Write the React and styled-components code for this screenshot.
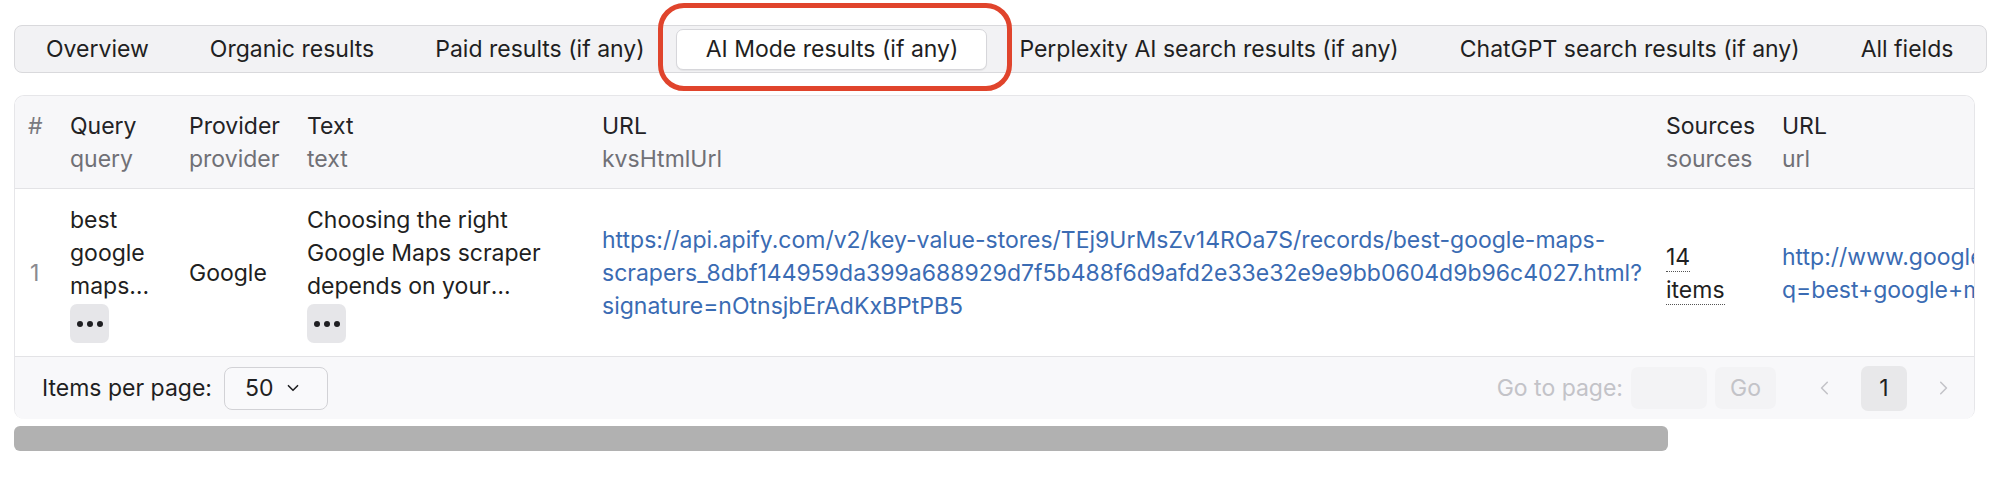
import React from "react";
import styled, { createGlobalStyle } from "styled-components";

const GlobalStyle = createGlobalStyle`
  body {
    margin: 0;
    background: #ffffff;
    font-family: Inter, "Noto Sans", sans-serif;
    color: #1f1f22;
  }
`;

const Page = styled.div`
  padding: 25px 13px 0 14px;
`;

// tab bar
const TabBar = styled.div`
  display: flex;
  align-items: center;
  height: 46px;
  padding: 0 4px 0 1px;
  background: #f2f2f4;
  border: 1px solid #d9d9dc;
  border-radius: 8px;
`;

const Tab = styled.div`
  position: relative;
  height: 41px;
  display: flex;
  align-items: center;
  padding: 0 28px 0 29px;
  margin-right: 2px;
  font-size: 23px;
  white-space: nowrap;
  color: #1f1f22;
  border-radius: 7px;
  box-sizing: border-box;
  background: ${(p) => (p.active ? "#ffffff" : "transparent")};
  border: 1px solid ${(p) => (p.active ? "#d6d6da" : "transparent")};
  box-shadow: ${(p) => (p.active ? "0 1px 1px rgba(0,0,0,0.06)" : "none")};
`;

// red annotation ring drawn over the active tab
const Ring = styled.span`
  position: absolute;
  left: -19px;
  right: -26px;
  top: -27px;
  bottom: -22px;
  border: 5px solid #e0442c;
  border-radius: 26px;
  pointer-events: none;
`;

const TableCard = styled.div`
  margin-top: 22px;
  width: 1961px;
  border: 1px solid #e6e6e9;
  border-bottom: none;
  border-radius: 10px;
  overflow: hidden;
  box-sizing: border-box;
`;

const Grid = styled.div`
  display: grid;
  grid-template-columns: 42px 119px 118px 295px 1064px 116px 420px;
  padding-left: 13px;
  background: ${(p) => (p.head ? "#f7f7f9" : "#ffffff")};
  border-bottom: 1px solid #e3e3e6;
  align-items: ${(p) => (p.head ? "start" : "center")};
  padding-top: ${(p) => (p.head ? "14px" : "15px")};
  padding-bottom: ${(p) => (p.head ? "12px" : "13px")};
`;

const HeadCell = styled.div`
  font-size: 23px;
  line-height: 33px;
  white-space: nowrap;
  color: ${(p) => (p.muted ? "#7a7a80" : "#232326")};
`;

const SubLabel = styled.div`
  color: #707076;
`;

const Cell = styled.div`
  font-size: 23px;
  line-height: 33px;
  color: ${(p) => (p.muted ? "#8a8a90" : "#1f1f22")};
  white-space: nowrap;
  overflow: hidden;
`;

const Clamp = styled.div`
  width: ${(p) => p.w}px;
  white-space: normal;
  display: -webkit-box;
  -webkit-line-clamp: 3;
  -webkit-box-orient: vertical;
  overflow: hidden;
`;

const MoreButton = styled.div`
  width: 39px;
  height: 39px;
  margin-top: 1px;
  border-radius: 7px;
  background: #e6e6e9;
  display: flex;
  align-items: center;
  justify-content: center;
  gap: 4px;
`;

const Dot = styled.span`
  width: 6px;
  height: 6px;
  border-radius: 50%;
  background: #1f1f22;
`;

const Link = styled.a`
  color: #3a6bb3;
  text-decoration: none;
`;

const Dotted = styled.span`
  border-bottom: 1px dotted #555;
`;

const Footer = styled.div`
  display: flex;
  align-items: center;
  height: 62px;
  padding: 0 13px 0 27px;
  background: #f8f8fa;
  font-size: 23px;
  color: #1f1f22;
`;

const Select = styled.div`
  display: flex;
  align-items: center;
  gap: 12px;
  height: 43px;
  width: 104px;
  box-sizing: border-box;
  margin-left: 12px;
  padding-left: 20px;
  border: 1px solid #d2d2d6;
  border-radius: 8px;
  background: #f9f9fb;
  font-size: 23px;
`;

const Spacer = styled.div`
  flex: 1;
`;

const GoLabel = styled.span`
  color: #c3c3c8;
`;

const GoInput = styled.div`
  width: 76px;
  height: 42px;
  margin-left: 8px;
  border-radius: 7px;
  background: #f3f3f5;
`;

const GoButton = styled.div`
  width: 61px;
  height: 42px;
  margin-left: 8px;
  border-radius: 7px;
  background: #f3f3f5;
  color: #c3c3c8;
  display: flex;
  align-items: center;
  justify-content: center;
`;

const PageArrow = styled.div`
  width: 37px;
  display: flex;
  justify-content: center;
  color: #c3c3c8;
  margin: ${(p) => p.m};
`;

const PageNum = styled.div`
  width: 46px;
  height: 45px;
  border-radius: 7px;
  background: #e8e8ea;
  display: flex;
  align-items: center;
  justify-content: center;
  font-size: 23px;
`;

const ScrollTrack = styled.div`
  margin-top: 7px;
  width: 1961px;
  height: 25px;
`;

const ScrollThumb = styled.div`
  height: 100%;
  border-radius: 6px;
  background: #b1b1b1;
`;

const Chevron = ({ dir = "down", size = 14 }) => {
  const d =
    dir === "down"
      ? "M3 5l4 4 4-4"
      : dir === "left"
      ? "M9 2L4 7l5 5"
      : "M5 2l5 5-5 5";
  return (
    <svg width={size} height={size} viewBox="0 0 14 14" fill="none">
      <path d={d} stroke="currentColor" strokeWidth="1.4" strokeLinecap="round" strokeLinejoin="round" />
    </svg>
  );
};

const tabs = [
  "Overview",
  "Organic results",
  "Paid results (if any)",
  "AI Mode results (if any)",
  "Perplexity AI search results (if any)",
  "ChatGPT search results (if any)",
  "All fields",
];

const columns = [
  ["Query", "query"],
  ["Provider", "provider"],
  ["Text", "text"],
  ["URL", "kvsHtmlUrl"],
  ["Sources", "sources"],
  ["URL", "url"],
];

const More = () => (
  <MoreButton>
    <Dot />
    <Dot />
    <Dot />
  </MoreButton>
);

export default function App() {
  const thumbWidth = Math.round(1961 * 0.8435);

  return (
    <Page>
      <GlobalStyle />
      <TabBar>
        {tabs.map((t, i) => (
          <Tab key={t} active={i === 3}>
            {t}
            {i === 3 && <Ring />}
          </Tab>
        ))}
      </TabBar>

      <TableCard>
        <Grid head>
          <HeadCell muted>#</HeadCell>
          {columns.map(([title, key]) => (
            <HeadCell key={key}>
              {title}
              <SubLabel>{key}</SubLabel>
            </HeadCell>
          ))}
        </Grid>

        <Grid>
          <Cell muted style={{ paddingLeft: 2 }}>1</Cell>
          <Cell>
            <Clamp w={90}>best google maps scrapers for lead generation</Clamp>
            <More />
          </Cell>
          <Cell>Google</Cell>
          <Cell>
            <Clamp w={250}>
              Choosing the right Google Maps scraper depends on your specific needs, budget and technical skills.
            </Clamp>
            <More />
          </Cell>
          <Cell>
            <Link>
              https://api.apify.com/v2/key-value-stores/TEj9UrMsZv14ROa7S/records/best-google-maps-
              <br />
              scrapers_8dbf144959da399a688929d7f5b488f6d9afd2e33e32e9e9bb0604d9b96c4027.html?
              <br />
              signature=nOtnsjbErAdKxBPtPB5
            </Link>
          </Cell>
          <Cell>
            <Dotted>14</Dotted>
            <br />
            <Dotted>items</Dotted>
          </Cell>
          <Cell>
            <Link>
              http://www.google.com/search?
              <br />
              q=best+google+maps+scrapers
            </Link>
          </Cell>
        </Grid>

        <Footer>
          Items per page:
          <Select>
            50
            <Chevron dir="down" size={16} />
          </Select>
          <Spacer />
          <GoLabel>Go to page:</GoLabel>
          <GoInput />
          <GoButton>Go</GoButton>
          <PageArrow m="0 18px 0 30px">
            <Chevron dir="left" size={16} />
          </PageArrow>
          <PageNum>1</PageNum>
          <PageArrow m="0 0 0 17px">
            <Chevron dir="right" size={16} />
          </PageArrow>
        </Footer>
      </TableCard>

      <ScrollTrack>
        <ScrollThumb style={{ width: thumbWidth }} />
      </ScrollTrack>
    </Page>
  );
}
